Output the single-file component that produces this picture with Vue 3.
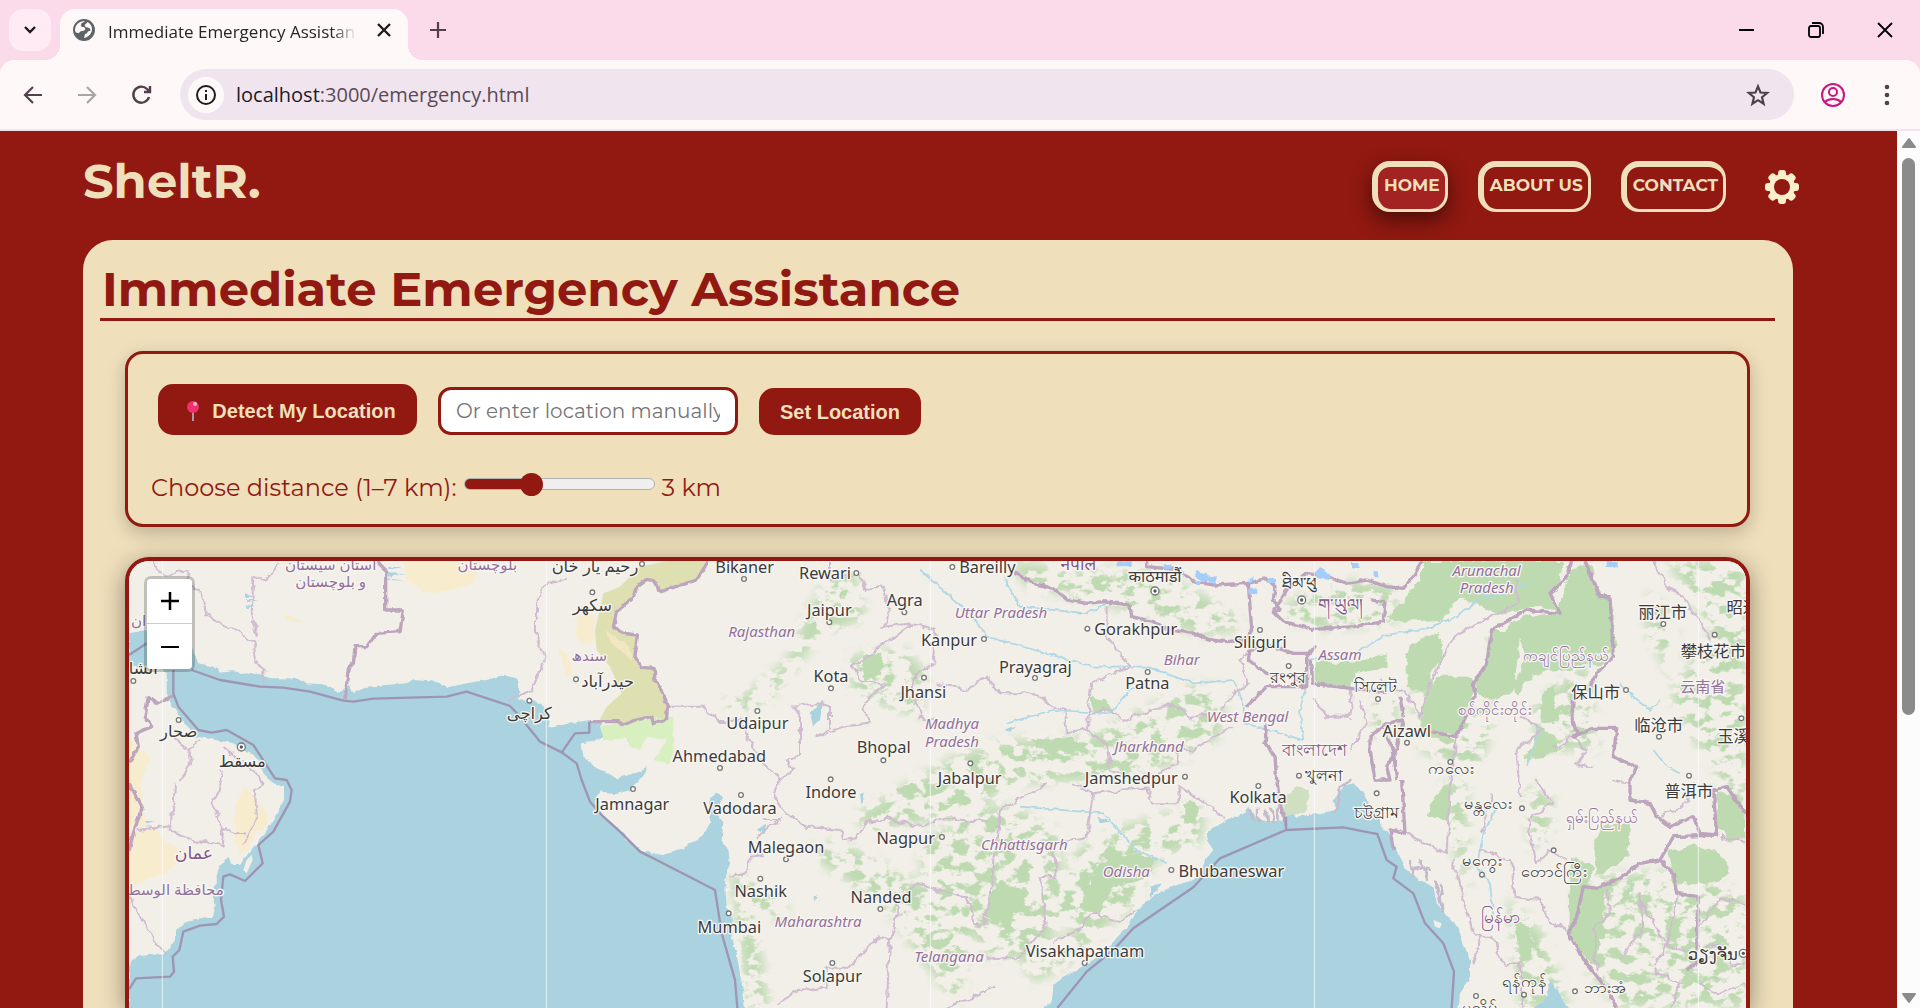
<script setup>
import { ref, computed } from 'vue'

const distance = ref(3)
const place = ref('')
const fill = computed(() => `${((distance.value - 1) / 6) * 100}%`)

const seas = [
  'M27 250 80 240 215 290 235 340 280 350 300 365 340 360 360 372 410 368 450 385 520 385 560 400 610 403 660 425 690 405 700 430 740 410 800 405 860 400 880 390 950 395 985 412 1040 400 1100 390 1150 375 1190 385 1198 430 1195 450 1250 455 1275 470 1290 510 1285 535 1350 520 1410 510 1450 515 1440 530 1450 560 1420 575 1385 580 1390 620 1430 655 1490 685 1560 665 1585 650 1560 690 1530 720 1490 732 1450 730 1440 720 1425 750 1430 780 1460 805 1500 840 1530 880 1570 905 1630 912 1690 895 1750 855 1770 820 1770 745 1790 730 1810 740 1800 760 1795 800 1810 815 1805 870 1825 900 1830 940 1815 990 1820 1070 1835 1100 1835 1160 1850 1210 1860 1270 1870 1330 1875 1380 27 1380 27 1245 50 1218 135 1212 165 1170 165 1145 200 1115 280 1100 285 1070 275 1020 290 1000 290 965 325 920 335 945 360 945 385 910 410 880 445 835 470 790 492 750 492 712 460 700 430 670 420 640 400 615 370 600 340 580 290 570 230 560 195 520 150 455 140 430 140 370 110 350 27 350Z',
  'M2765 1380 2795 1355 2800 1310 2830 1280 2895 1245 2950 1210 3020 1130 3070 1060 3120 1025 3180 1002 3220 990 3245 965 3255 930 3280 900 3260 870 3265 840 3325 810 3370 790 3385 770 3410 805 3440 815 3485 810 3490 770 3530 800 3565 795 3580 785 3600 790 3650 780 3640 750 3670 710 3700 700 3730 730 3750 770 3780 810 3780 820 3810 860 3835 910 3860 960 3900 990 3940 1010 3950 1060 3985 1100 4015 1130 4030 1180 4050 1230 4050 1280 4020 1330 4015 1380Z',
  'M4240 1380 4280 1340 4290 1290 4310 1315 4345 1380Z'
]

const deserts = [
  'M850 33H1080L1060 100 960 130 920 130 860 90Z',
  'M27 850 110 840 140 880 190 900 150 960 60 1000 27 1015Z',
  'M375 712 410 750 443 790 440 830 405 850 385 900 360 910 345 860 345 765Z',
  'M27 560 60 600 92 625 60 700 80 830 27 830Z',
  'M490 195 530 205 550 220 500 212Z',
  'M1370 200 1420 190 1425 270 1390 285 1365 255Z',
  'M1315 290 1345 320 1360 380 1340 380Z'
]
const dunes = 'M1455 240 1490 265 1530 290 1535 330 1500 300 1470 275Z'

const oliveArea = 'M1640 33H1765L1730 90 1620 125 1600 92 1580 88 1550 110 1540 140 1490 185 1480 232 1510 250 1552 255 1545 320 1565 352 1602 355 1605 390 1630 430 1642 470 1640 505 1600 520 1595 500 1540 512 1510 525 1495 515 1438 510 1460 470 1505 430 1470 350 1430 300 1425 240 1450 130 1500 110 1560 50Z'
const marsh = 'M1440 530 1500 520 1595 505 1660 500 1660 610 1645 645 1600 630 1640 570 1580 560 1560 600 1530 590 1520 565 1450 570Z'

const forests = [
  'M2230 310 2290 305 2280 370 2240 390 2225 350Z',
  'M2730 570 2850 565 2910 585 2860 610 2780 605Z',
  'M2910 440 2960 450 2975 480 2920 490Z',
  'M3585 335H3700L3800 310V350L3700 370 3690 415 3600 408 3580 380Z',
  'M3800 200 3850 150 3900 90 3910 33H4330L4325 100 4290 130 4320 190 4260 170 4200 180 4130 190 4020 140 3960 210 3850 215Z',
  'M4115 240 4150 240 4210 200 4310 190 4350 60 4410 45 4440 140 4475 140 4485 290 4440 350 4400 340 4350 360 4240 370 4190 440 4180 400 4220 330 4200 260 4180 430 4110 450 4060 430 4070 380 4100 340 4100 260Z',
  'M3870 280 3960 250 3970 320 3930 370 3940 430 3860 410 3860 330Z',
  'M3950 380 4060 380 4060 430 4010 560 3900 540 3910 460Z',
  'M4250 530 4290 550 4310 590 4340 580 4280 620 4215 628 4245 570Z',
  'M4270 430 4310 400 4300 520 4260 510Z',
  'M4440 830 4530 820 4525 920 4430 980 4420 900Z',
  'M4380 1020 4460 1010 4450 1090 4430 1250 4360 1190 4345 1130 4370 1060Z',
  'M4350 920 4420 950 4400 1010 4370 1090 4345 1140Z',
  'M3930 760 3990 690 3990 810 3920 800Z',
  'M4790 720 4850 740 4878 800V860L4830 880 4790 830Z',
  'M4640 910 4720 880 4800 910 4830 970 4780 1000 4660 1000Z',
  'M4190 1120 4230 1130 4235 1230 4200 1240Z',
  'M2940 940 3020 910 3110 920 3090 980 2980 1010 2940 1090 2870 1080Z',
  'M3190 760 3230 755 3230 810 3190 825Z',
  'M2330 710 2390 700 2410 725 2350 745Z',
  'M2640 990 2700 1020 2690 1090 2620 1120 2590 1090Z'
]

const woods = [
  'M1830 970 1900 990 2010 1080 1990 1110 1900 1080 1930 1250 1950 1374 1880 1374 1860 1200Z',
  'M2180 320 2350 290 2420 370 2400 500 2200 440Z',
  'M1800 450 1880 430 2000 330 2060 190 2110 100 2200 60 2240 200 2100 260 1960 440 1850 500Z',
  'M2200 800 2360 700 2500 620 2650 570 2900 560 3230 400 3320 420 3300 560 3170 640 3000 690 2700 700 2500 800 2250 850Z',
  'M2400 890 2560 760 2700 780 2820 850 2830 1050 2790 1170 2740 1230 2600 1220 2540 1110 2420 1080Z',
  'M2800 1100 2870 900 3000 830 3250 760 3250 870 3100 940 3050 1060 2920 1160Z',
  'M2700 1220 2850 1150 2960 1140 2850 1240 2740 1300Z',
  'M2660 33 2900 60 3100 60 3200 110 3320 170 3380 230 3250 260 3080 200 2900 150 2720 110Z',
  'M3470 190 3530 140 3700 90 3830 110 3830 220 3580 240Z',
  'M3870 430 3980 380 4090 440 4130 480 4080 660 3980 640 3900 600Z',
  'M3760 450 3830 430 3830 560 3760 580Z',
  'M3960 700 4040 690 4050 1050 4000 900Z',
  'M4230 480 4400 330 4440 600 4260 600Z',
  'M4220 700 4300 740 4290 860 4230 900Z',
  'M4160 1040 4270 1150 4350 1374 4200 1374Z',
  'M4360 1000 4720 960 4878 1040 4878 1374 4500 1374 4400 1260Z',
  'M4360 980 4720 960 4840 1040 4840 1374 4520 1374 4400 1240Z',
  'M4580 120 4670 200 4660 400 4580 250Z',
  'M4640 33 4878 33 4878 900 4780 650 4700 540 4650 430 4780 250Z',
  'M2050 900 2160 870 2400 1000 2560 1100 2520 1374 2420 1250 2300 1080Z'
]

const nationBorders = [
  'M1765 33 1730 90 1620 125 1600 92 1580 88 1550 110 1540 140 1490 185 1480 232 1510 250 1552 255 1545 320 1565 352 1602 355 1605 390 1630 430 1642 470 1640 505 1600 520 1595 500 1540 512 1510 525 1495 515 1410 515',
  'M770 33 797 60 797 180 850 180 840 245 770 250 740 290 705 290 700 340 685 355 675 450',
  'M27 700 67 770 40 850 27 900M27 640 55 590 48 550 95 530 75 500 85 440 110 460 160 437',
  'M2685 65 2740 100 2800 115 2845 150 2900 160 2950 155 3030 165 3035 200 3100 215 3150 240 3220 250 3270 270 3320 275 3380 270 3395 240 3385 100 3280 105 3220 95 3180 60 3080 50V33',
  'M3385 100 3440 85 3465 110 3460 150 3480 180 3460 185 3490 215 3580 238 3700 230 3790 215 3795 155 3750 150',
  'M3460 180 3480 155 3500 120 3560 70 3620 80 3680 100 3740 90 3800 110 3850 115 3880 80 3905 33',
  'M3395 270 3385 330 3440 370 3520 380 3560 410 3560 320 3585 290 3570 310 3520 310 3460 290 3395 300M3560 410 3440 410 3380 470M3570 330 3580 400 3690 415M3440 520 3435 580 3465 620 3470 690 3480 760 3498 830',
  'M3690 415 3800 425M3765 690 3750 600 3750 560 3800 520 3850 510 3830 600 3800 650 3810 690 3765 690M3850 500 3840 440M3800 560 3820 600 3830 690M3845 690 3855 850 3810 840 3820 900',
  'M4355 33 4335 90 4290 130 4320 190 4220 180 4115 240 4100 340 4060 400 4065 440 4010 560 3930 545M4395 33 4440 140 4470 140 4480 320 4430 370 4400 430M4360 450 4355 500 4370 550 4360 560 4420 535 4490 535 4480 620 4550 650 4530 690 4530 750 4590 760 4610 800 4650 830 4720 800 4740 850 4790 855 4780 720 4820 710 4878 790',
  'M4790 855 4660 860 4620 930 4560 940 4500 985 4430 1015 4390 1010 4370 1100 4345 1150 4400 1240 4470 1330 4490 1374',
  'M4620 930 4660 970 4670 1030 4735 1040 4730 1240 4700 1260'
]

const stateBorders = [
  'M98 33 130 75 205 60 205 110 240 120 255 190 360 250 400 275 408 330 430 352V410M470 45 440 95 400 80 395 200 410 260',
  'M160 560 205 600 240 570M165 700 155 840 220 870 305 885 310 840 275 760 300 720 305 660M205 600 210 640 185 690M310 590 400 660 430 700 405 720 410 800 375 880M50 840 160 828M27 1040 80 1140 135 1210M310 840 375 855',
  'M1340 80 1270 110 1245 170 1245 250 1275 330 1235 420 1160 455',
  'M1642 470 1750 470 1790 510 1860 510 1890 580 1930 640 1980 690 2020 660 2000 630 2040 610 2040 500 2020 470 2090 460 2130 470 2130 530 2090 560 2170 530 2250 520 2230 460 2290 400 2220 390 2200 350 2280 290 2380 220 2290 230 2310 190 2290 110 2240 120 2220 70 2130 90 2130 33',
  'M2380 220 2450 240 2440 340 2390 370 2380 420 2400 500 2440 510M2450 400 2540 420 2600 380 2640 430 2750 430 2790 470 2840 480 2840 550 2900 540 2910 400 3030 350 2960 260 2960 170',
  'M2900 490 2970 480 3010 510 3150 460 3210 500 3300 490 3340 430 3380 400 3360 330 3400 290',
  'M2900 540 2960 580 2970 660 3060 690 3180 640 3160 600 3220 600 3340 530',
  'M1930 810H1980L1910 860M1980 690 1960 730 1990 780 2060 830 2160 840 2170 870 2210 865 2240 820 2300 800 2380 830 2500 805 2600 820M1830 980 1880 970 1890 920 1930 915',
  'M1970 1365 2040 1320 2120 1310 2120 1250 2190 1250 2280 1155 2310 1170 2340 1070 2320 1060 2390 1000 2540 1040 2560 1120 2590 1120 2610 1060 2620 960 2640 780 2780 700',
  'M2850 700 2920 730 2900 860 2800 880 2810 980 2760 985 2780 1120 2700 1220 2600 1230',
  'M2310 1170 2300 1374M2480 1374 2620 1310M2800 1180 2870 1140 2920 1085 3000 1120 3045 1080',
  'M2920 730 3080 710 3100 760 3170 760 3180 710 3260 760 3320 810',
  'M3780 390 3860 430 3900 500 3930 400 3970 320 4010 250 4110 200 4190 160 4190 90M4010 560 3990 690 3980 910 3840 840M4200 500 4270 540 4190 600 4200 750M4240 690 4300 760 4220 810 4250 940 4290 900 4340 930',
  'M4080 850 4120 730M4080 900 4170 930 4180 1040 4260 1050 4290 1120 4350 1140M4000 930 4050 1130 4080 1160 4060 1250M4080 1160 4120 1160 4150 1250 4200 1240 4210 1374',
  'M4460 1015 4470 1090 4420 1130 4430 1260M4560 1030 4570 1130 4500 1230M4560 1050 4640 1180 4600 1250M4670 1040 4640 1190 4720 1210M4600 33 4640 110 4700 150 4750 230 4770 270',
  'M4735 1130 4800 1050 4878 1060M4735 1200 4800 1180 4840 1250 4878 1240M4600 1260 4680 1300 4650 1374M4735 1300 4800 1330 4878 1300',
  'M3580 450 3620 500 3690 500 3700 450 3690 415M3720 450 3740 520 3690 600',
  'M4300 590 4360 560 4400 600 4370 640 4420 650M4620 800 4700 760 4720 700M4480 690 4530 700M4800 860 4878 880'
]

const waters = [
  'M215 360 300 390 420 410 490 413 570 425 670 452 700 455 760 446 980 440 1040 425 1170 468 1200 500 1260 575 1325 607 1365 550 1408 548V515M1325 607 1370 640 1385 690 1410 755 1450 800 1500 845 1560 905 1610 930 1785 1020 1805 1150 1845 1290 1852 1374',
  'M160 360V430L175 470 235 540 275 548 320 540 400 585 465 685 500 690 515 720 510 755 460 845 415 885 428 940 375 993 330 973 310 980 303 1050 312 1100 290 1122 240 1127 190 1145 178 1200 158 1220 162 1265 150 1280 48 1285 27 1318M27 315 50 300 80 280',
  'M2812 1374 2900 1265 2980 1200 3040 1135 3220 1012 3300 925 3498 840 3670 832 3750 848 3772 852 3800 930 3830 950 3820 985 3880 1030 3915 1120 3970 1180 4002 1265 3995 1374M3498 840V800'
]

const rivers = [
  'M2400 60 2560 200 2600 260 2780 310 2920 350 3080 350 3220 400 3340 390 3370 460 3375 520',
  'M3375 520 3550 570 3540 480 3560 400 3560 330 3700 310 3800 255 3920 235 4010 200 4080 145 4150 130 4230 100',
  'M2650 80 2700 170 2900 190 2960 160M2660 520 2800 480 2970 490 3040 410M2700 770 2950 790 3050 900 3140 940',
  'M4220 650 4260 540 4240 520M4130 770 4090 850 4070 950 4110 1000 4120 1100M4600 600 4640 650 4680 670M4500 400 4550 450 4590 480 4620 450'
]

const cities = [
  [70, 372, 'الشا'], [1228, 508, 'کراچی'], [176, 562, 'صحار'], [367, 652, 'مسقط'],
  [1425, 65, 'رحیم یار خان'], [1417, 182, 'سکھر'], [1463, 410, 'حیدرآباد'],
  [1874, 70, 'Bikaner'], [2115, 86, 'Rewari'], [2128, 198, 'Jaipur'], [2354, 167, 'Agra'],
  [2487, 287, 'Kanpur'], [2133, 397, 'Kota'], [2410, 444, 'Jhansi'], [1912, 538, 'Udaipur'],
  [2291, 610, 'Bhopal'], [1798, 637, 'Ahmedabad'], [2549, 701, 'Jabalpur'], [1537, 780, 'Jamnagar'],
  [2133, 745, 'Indore'], [1860, 792, 'Vadodara'], [1998, 910, 'Malegaon'], [2357, 882, 'Nagpur'],
  [1922, 1040, 'Nashik'], [2283, 1060, 'Nanded'], [1828, 1148, 'Mumbai'], [2137, 1297, 'Solapur'],
  [2602, 70, 'Bareilly'], [3105, 95, 'काठमाडौं'], [3047, 254, 'Gorakhpur'], [3421, 293, 'Siliguri'],
  [2746, 370, 'Prayagraj'], [3082, 418, 'Patna'], [3505, 398, 'রংপুর'], [3613, 692, 'খুলনা'],
  [3034, 702, 'Jamshedpur'], [3537, 118, 'ཐིམ་ཕུ'], [3767, 425, 'সিলেট'], [3414, 758, 'Kolkata'],
  [3334, 980, 'Bhubaneswar'], [2895, 1222, 'Visakhapatnam'], [3770, 804, 'চট্টগ্রাম'],
  [4628, 205, '丽江市'], [4893, 190, '昭通市'], [4780, 320, '攀枝花市'], [4427, 445, '保山市'],
  [4616, 543, '临沧市'], [4865, 575, '玉溪市'], [3860, 560, 'Aizawl'], [3993, 672, 'ကလေး'],
  [4105, 778, 'မန္တလေး'], [4706, 742, '普洱市'], [4086, 948, 'မကွေး'], [4303, 980, 'တောင်ကြီး'],
  [4213, 1310, 'ရန်ကုန်'], [4455, 1328, 'ဘားအံ'], [4778, 1230, 'ວຽງຈັນ'], [4080, 1390, 'ပုသိမ်']
]

const states = [
  [1925, 262, 'Rajasthan'], [2496, 537, 'Madhya'], [2496, 590, 'Pradesh'], [2094, 1130, 'Maharashtra'],
  [2487, 1235, 'Telangana'], [2643, 203, 'Uttar Pradesh'], [3185, 346, 'Bihar'], [3660, 330, 'Assam'],
  [3383, 515, 'West Bengal'], [3087, 605, 'Jharkhand'], [2713, 900, 'Chhattisgarh'], [3019, 982, 'Odisha'],
  [4100, 78, 'Arunachal'], [4100, 130, 'Pradesh']
]

const regions = [
  [632, 61, 'استان سیستان'], [632, 112, 'و بلوچستان'], [1102, 60, 'بلوچستان'], [56, 228, 'ان'],
  [1408, 332, 'سندھ'], [150, 1034, 'محافظة الوسطى'], [4335, 333, 'ကချင်ပြည်နယ်'],
  [4125, 495, 'စစ်ကိုင်းတိုင်း'], [4445, 820, 'ရှမ်းပြည်နယ်'], [4748, 427, '云南省']
]

const countries = [
  [222, 927, 'عمان'], [2875, 59, 'नेपाल'], [3583, 617, 'বাংলাদেশ'], [3660, 184, 'ག་ཡུལ།'], [4140, 1120, 'မြန်မာ']
]

const dots = [
  [40, 393], [176, 510], [1228, 452], [1566, 42], [1417, 127], [1368, 388], [1872, 87], [2209, 69],
  [2353, 187], [2128, 217], [2592, 267], [2133, 415], [2412, 383], [1912, 483], [2290, 631], [1800, 654],
  [2551, 640], [2132, 688], [2497, 51], [1539, 717], [1863, 735], [1998, 928], [2466, 861], [1921, 986],
  [2281, 1077], [1826, 1090], [2137, 1239], [2902, 236], [2745, 384], [3083, 366], [3420, 240], [3506, 348],
  [3537, 677], [3195, 680], [3774, 447], [3415, 708], [3154, 960], [2894, 1239], [3770, 730], [4630, 222],
  [4784, 254], [4518, 420], [4617, 560], [4864, 505], [4707, 677], [3861, 578], [3991, 636], [4206, 775],
  [4301, 901], [4086, 974], [4212, 1334], [4365, 1324], [4068, 1338]
]
const capitals = [[364, 591], [3105, 123], [3545, 150], [4870, 1210]]
const seams = [127, 1279, 2431, 3583, 4735]
</script>

<template>
  <div class="window">
    <header class="tabs">
      <button class="tab-search" aria-label="Search tabs">
        <svg width="16" height="16" viewBox="0 0 16 16"><path d="m3 5 5 5 5-5" fill="none" stroke="#1f1a1e" stroke-width="2.4" /></svg>
      </button>
      <div class="tab">
        <svg width="24" height="24" viewBox="0 0 24 24">
          <circle cx="12" cy="12" r="11" fill="#5f6368" />
          <path d="M13 3c-1 2-4 1-4 4s3 1 4 3-1 3-3 3-2 2-4 2-3-1-3-3c0-5 4-9 10-9Zm2 1c3 1 5 4 5 7 0 4-3 8-8 9l1-4c3 0 2-3 4-3s2-2 0-3-3 0-4-2 2-2 2-4Z" fill="#fff8f8" />
        </svg>
        <span class="tab-title">Immediate Emergency Assistance</span>
        <button class="plain" aria-label="Close tab">
          <svg width="16" height="16" viewBox="0 0 16 16"><path d="m2 2 12 12M14 2 2 14" stroke="#1f1a1e" stroke-width="2.4" /></svg>
        </button>
      </div>
      <button class="plain new-tab" aria-label="New tab">
        <svg width="18" height="18" viewBox="0 0 18 18"><path d="M9 1v16M1 9h16" stroke="#54404d" stroke-width="2.2" /></svg>
      </button>
      <div class="controls">
        <button class="plain" aria-label="Minimize"><svg width="18" height="18" viewBox="0 0 18 18"><path d="M1 9h15" stroke="#000" stroke-width="2" /></svg></button>
        <button class="plain" aria-label="Restore">
          <svg width="18" height="18" viewBox="0 0 18 18" fill="none" stroke="#000" stroke-width="1.8"><rect x="2" y="5" width="11" height="11" rx="2" /><path d="M5 2h7a4 4 0 0 1 4 4v7" /></svg>
        </button>
        <button class="plain" aria-label="Close"><svg width="18" height="18" viewBox="0 0 18 18"><path d="m2 2 14 14M16 2 2 16" stroke="#000" stroke-width="1.8" /></svg></button>
      </div>
    </header>

    <div class="toolbar">
      <button class="plain" aria-label="Back"><svg width="22" height="22" viewBox="0 0 22 22" fill="none" stroke="#54404d" stroke-width="2.2"><path d="M20 11H3M11 3l-8 8 8 8" /></svg></button>
      <button class="plain" aria-label="Forward"><svg width="22" height="22" viewBox="0 0 22 22" fill="none" stroke="#aaa3a7" stroke-width="2.2"><path d="M2 11h17M11 3l8 8-8 8" /></svg></button>
      <button class="plain" aria-label="Reload"><svg width="22" height="22" viewBox="0 0 22 22" fill="none" stroke="#54404d" stroke-width="2.4"><path d="M19 13a8 8 0 1 1-2-8l3 3M20 2v6h-6" /></svg></button>
      <div class="omnibox">
        <button class="info" aria-label="Site information">
          <svg width="22" height="22" viewBox="0 0 22 22" fill="none" stroke="#1f1a1e" stroke-width="2"><circle cx="11" cy="11" r="9" /><path d="M11 10v6M11 6v2" /></svg>
        </button>
        <span class="url"><b>localhost</b>:3000/emergency.html</span>
        <button class="plain" aria-label="Bookmark">
          <svg width="26" height="26" viewBox="0 0 24 24" fill="none" stroke="#4d4149" stroke-width="2"><path d="m12 4 2.300 5.700 6.200.4-4.800 4 1.500 6-5.200-3.300-5.200 3.300 1.500-6-4.800-4 6.200-.4Z" /></svg>
        </button>
      </div>
      <button class="plain profile" aria-label="Profile">
        <svg width="26" height="26" viewBox="0 0 26 26" fill="none" stroke="#c8177f" stroke-width="2"><circle cx="13" cy="13" r="11" /><circle cx="13" cy="10" r="4" /><path d="M5 20c4-4 12-4 16 0" /></svg>
      </button>
      <button class="plain" aria-label="Menu"><svg width="6" height="24" viewBox="0 0 6 24" fill="#54404d"><circle cx="3" cy="4" r="2.300" /><circle cx="3" cy="12" r="2.300" /><circle cx="3" cy="20" r="2.300" /></svg></button>
    </div>

    <div class="viewport">
      <div class="page">
        <div class="site-head">
          <div class="brand">SheltR.</div>
          <nav>
            <a href="#home" class="active">HOME</a>
            <a href="#about">ABOUT US</a>
            <a href="#contact">CONTACT</a>
            <button class="plain gear" aria-label="Settings">
              <svg width="36" height="36" viewBox="-18 -18 36 36">
                <g fill="#fbeecb"><rect v-for="n in 4" :key="n" x="-4" y="-17" width="8" height="34" rx="3" :transform="`rotate(${n * 45})`" /><circle r="13" /></g>
                <circle r="8" fill="#911911" />
              </svg>
            </button>
          </nav>
        </div>

        <main>
          <h1>Immediate Emergency Assistance</h1>
          <section class="panel">
            <div class="row">
              <button class="detect">
                <svg width="14" height="22" viewBox="0 0 14 22"><path d="M7 10v11" stroke="#a99aa6" stroke-width="2" /><circle cx="7" cy="7" r="6" fill="#f0306f" /><circle cx="9" cy="4" r="2" fill="#ffb3cc" /></svg>
                Detect My Location
              </button>
              <input v-model="place" type="text" aria-label="Location" placeholder="Or enter location manually" />
              <button class="set">Set Location</button>
            </div>
            <div class="distance">
              <label for="distance">Choose distance (1–7 km):</label>
              <input id="distance" v-model.number="distance" type="range" min="1" max="7" :style="{ '--fill': fill }" />
              <output for="distance">{{ distance }} km</output>
            </div>
          </section>

          <section class="map" aria-label="Map">
            <svg class="tiles" viewBox="27 33 4851 1341" preserveAspectRatio="xMinYMin slice">
              <defs>
                <filter id="rough" x="-5%" y="-5%" width="110%" height="110%">
                  <feTurbulence type="fractalNoise" baseFrequency="0.03" numOctaves="3" seed="4" />
                  <feDisplacementMap in="SourceGraphic" scale="26" xChannelSelector="R" yChannelSelector="G" />
                </filter>
                <filter id="coast" x="-1%" y="-1%" width="102%" height="102%">
                  <feTurbulence type="fractalNoise" baseFrequency="0.05" numOctaves="2" seed="7" />
                  <feDisplacementMap in="SourceGraphic" scale="12" xChannelSelector="R" yChannelSelector="G" />
                </filter>
                <filter id="speckle" x="0" y="0" width="100%" height="100%">
                  <feTurbulence type="fractalNoise" baseFrequency="0.022 0.03" numOctaves="5" seed="11" />
                  <feColorMatrix values="0 0 0 0 0  0 0 0 0 0  0 0 0 0 0  9 0 0 0 -4.400" result="n" />
                  <feGaussianBlur in="SourceGraphic" stdDeviation="18" />
                  <feComposite in2="n" operator="in" />
                </filter>
              </defs>
              <rect x="27" y="33" width="4851" height="1341" fill="#f2efe9" />
              <g fill="#f7ecce" filter="url(#coast)"><path v-for="d in deserts" :key="d" :d="d" /></g>
              <g fill="#bedab1" filter="url(#speckle)"><path v-for="d in woods" :key="d" :d="d" /></g>
              <g fill="#bedab1" filter="url(#rough)"><path v-for="d in forests" :key="d" :d="d" /></g>
              <path :d="oliveArea" fill="#dee0b1" />
              <path :d="dunes" fill="#f3e7c3" filter="url(#coast)" />
              <path :d="marsh" fill="#d8efc0" filter="url(#coast)" />
              <g fill="#aad3df" filter="url(#coast)">
                <path v-for="d in seas" :key="d" :d="d" />
                <path d="M2070 490 2110 450 2100 510 2080 530ZM1910 840 1940 820 1930 850ZM2220 730 2235 725 2225 770ZM3090 1010 3125 1000 3110 1025 3090 1040ZM2650 540 2690 525 2670 545ZM2930 800 2970 815 2940 820ZM2080 1040 2090 1035 2085 1055ZM375 130 400 140 375 145ZM378 150 415 150 380 157ZM378 165 405 168 380 175ZM805 50 850 52 805 58ZM800 70 860 72 805 80ZM800 85 855 92 805 90ZM75 812 105 814 80 820Z" />
              </g>
              <path d="M370 960 380 930 395 915 398 930 380 970ZM3940 1110 3965 1120 3960 1135 3945 1130ZM3590 770 3620 700 3650 710 3630 780Z" fill="#f2efe9" />
              <path d="M3490 800 3500 740 3530 710 3570 720 3560 780 3520 795Z" fill="#cfe0c2" filter="url(#rough)" />
              <path d="M3390 780 3400 815M3415 770V812M3435 775 3440 815M3455 770 3460 812M3475 765V808M3870 930 3890 980M3900 930 3920 990M3880 950 3930 960M3940 990 3960 1060M3960 1000 3970 1090M3640 790 3660 720 3690 690" fill="none" stroke="#c5bac9" stroke-width="9" filter="url(#rough)" />
              <g fill="none" stroke="#afd8e6" stroke-width="5" filter="url(#coast)"><path v-for="d in rivers" :key="d" :d="d" /></g>
              <g fill="none" stroke="#d0bcd0" stroke-width="6" filter="url(#rough)"><path v-for="d in stateBorders" :key="d" :d="d" /></g>
              <g fill="none" stroke="#bda5bd" stroke-width="10" stroke-linejoin="round" filter="url(#coast)"><path v-for="d in nationBorders" :key="d" :d="d" /></g>
              <g fill="none" stroke="#9d95b3" stroke-width="7" stroke-linejoin="round"><path v-for="d in waters" :key="d" :d="d" /></g>
              <path d="M2990 40h45M3130 45h25M3225 70l60 20M3235 90v15M3380 85h20M3440 90h25M3385 125h30M3590 65l35 15M3690 48h20M3770 60v25M4460 42h30" stroke="#a3cdfb" stroke-width="18" filter="url(#rough)" />
              <g stroke="#fff" stroke-opacity="0.700" stroke-width="3"><path v-for="x in seams" :key="x" :d="`M${x} 33V1374`" /></g>
              <g fill="#fff" stroke="#777" stroke-width="4">
                <circle v-for="[x, y] in dots" :key="`${x}-${y}`" :cx="x" :cy="y" r="7" />
                <circle v-for="[x, y] in capitals" :key="`${x}-${y}`" :cx="x" :cy="y" r="12" />
              </g>
              <circle v-for="[x, y] in capitals" :key="`${x}-${y}`" :cx="x" :cy="y" r="5" fill="#555" />
              <text v-for="[x, y, name] in cities" :key="name" :x="x" :y="y" class="city">{{ name }}</text>
              <text v-for="[x, y, name] in states" :key="name + y" :x="x" :y="y" class="state">{{ name }}</text>
              <text v-for="[x, y, name] in regions" :key="name" :x="x" :y="y" class="region">{{ name }}</text>
              <text v-for="[x, y, name] in countries" :key="name" :x="x" :y="y" class="country">{{ name }}</text>
            </svg>
            <div class="zoom">
              <button aria-label="Zoom in"><svg width="19" height="18" viewBox="0 0 19 18"><path d="M10 0v18M1 9h18" stroke="#000" stroke-width="2.500" /></svg></button>
              <button aria-label="Zoom out"><svg width="19" height="18" viewBox="0 0 19 18"><path d="M1 9h18" stroke="#000" stroke-width="2" /></svg></button>
            </div>
          </section>
        </main>
      </div>
      <div class="scrollbar" aria-hidden="true">
        <svg width="16" height="12" viewBox="0 0 16 12"><path d="M8 2 14 10H2Z" fill="#8b8b8b" stroke="#8b8b8b" stroke-width="2" stroke-linejoin="round" /></svg>
        <div class="track"><div class="thumb"></div></div>
        <svg width="16" height="12" viewBox="0 0 16 12"><path d="M8 10 14 2H2Z" fill="#8b8b8b" stroke="#8b8b8b" stroke-width="2" stroke-linejoin="round" /></svg>
      </div>
    </div>
  </div>
</template>

<style>
body { margin: 0; }
</style>

<style scoped>
* { box-sizing: border-box; }
button { padding: 0; border: 0; font: inherit; cursor: pointer; }
svg { display: block; }
.window { display: flex; flex-direction: column; height: 100vh; overflow: hidden; background: #fbdaea; font-family: "Noto Sans", sans-serif; }
.plain { display: grid; place-items: center; background: none; }

.tabs { display: flex; height: 60px; padding: 9px 26px 0 9px; }
.tab-search { display: grid; place-items: center; width: 42px; height: 42px; border-radius: 14px; background: #feebf4; }
.tab { position: relative; display: flex; align-items: center; width: 348px; height: 51px; margin-left: 9px; padding: 0 16px 10px 12px; border-radius: 15px 15px 0 0; background: #fff8f8; }
.tab::before, .tab::after { content: ""; position: absolute; bottom: 0; width: 15px; height: 15px; }
.tab::before { right: 100%; background: radial-gradient(circle at 0 0, transparent 15px, #fff8f8 15px); }
.tab::after { left: 100%; background: radial-gradient(circle at 100% 0, transparent 15px, #fff8f8 15px); }
.tab-title { flex: 1; margin: 4px 14px 0 12px; overflow: hidden; font: 400 17px/24px "Open Sans", "Noto Sans", sans-serif; color: #2a2328; white-space: nowrap; mask-image: linear-gradient(90deg, #000 88%, transparent 98%); }
.new-tab { width: 42px; height: 42px; margin-left: 9px; }
.controls { display: flex; gap: 51px; height: 42px; margin-left: auto; }

.toolbar { display: flex; align-items: center; height: 71px; padding: 0 30px 0 22px; gap: 32px; border-bottom: 2px solid #f0e2ee; border-radius: 14px 14px 0 0; background: #fff8f8; }
.omnibox { flex: 1; display: flex; align-items: center; height: 51px; margin-left: -4px; padding: 0 23px 0 8px; border-radius: 26px; background: #f0e5ee; }
.info { display: grid; place-items: center; width: 36px; height: 36px; border-radius: 50%; background: #fff8f8; }
.url { flex: 1; margin-left: 12px; font: 400 20px/28px "Open Sans", "Noto Sans", sans-serif; color: #5b4a56; }
.url b { font-weight: 400; color: #1f1a1e; }
.profile { margin: 0 6px 0 -6px; }

.viewport { flex: 1; display: flex; min-height: 0; }
.page { flex: 1; display: flex; flex-direction: column; min-width: 0; padding: 0 104px 0 83px; overflow: hidden; background: #911911; font-family: Montserrat, Inter, sans-serif; }
.site-head { display: flex; justify-content: space-between; flex: none; height: 109px; padding-top: 20px; }
.brand { font-size: 48px; line-height: 60px; font-weight: 700; color: #efdfbb; }
nav { display: flex; align-items: flex-start; gap: 30px; margin-right: -7px; padding-top: 10px; }
nav a { height: 51px; padding: 7px 5px 0 6px; border: 3px solid #efdfbb; border-width: 6px 3px 3px 6px; border-radius: 18px; font-size: 17px; line-height: 22px; font-weight: 700; color: #efdfbb; text-decoration: none; }
nav a.active { background: #a32222; box-shadow: 0 8px 20px rgba(0, 0, 0, 0.5); }
.gear { height: 51px; margin-left: 8px; }

main { flex: 1; display: flex; flex-direction: column; min-height: 0; padding: 18px 18px 0 17px; border-radius: 30px 30px 0 0; background: #efdfbb; color: #911911; }
h1 { flex: none; margin: 0; padding: 2px 2px 0; border-bottom: 3px solid #911911; font-size: 48px; line-height: 58px; font-weight: 700; }
.panel { flex: none; margin: 30px 25px 0; padding: 30px 23px 22px; border: 3px solid #911911; border-radius: 18px; background: #efdfbb; box-shadow: 0 6px 18px rgba(0, 0, 0, 0.22); }
.row { display: flex; align-items: flex-end; gap: 21px; padding-left: 7px; }
.row button { display: flex; align-items: center; justify-content: center; border-radius: 15px; background: #911911; color: #efdfbb; font: 700 20px/24px "Liberation Sans", sans-serif; }
.row .detect { width: 259px; height: 51px; padding: 2px 0 0 7px; gap: 12px; }
.set { width: 162px; height: 47px; }
.row input { width: 300px; height: 48px; padding: 0 15px; border: 3px solid #911911; border-radius: 13px; background: #fff; font: 400 20px/24px Montserrat, Inter, sans-serif; }
.row input::placeholder { color: #757575; }
.distance { display: flex; align-items: center; height: 33px; margin-top: 34px; gap: 7px; padding-top: 4px; font-size: 24px; line-height: 30px; }
.distance input { appearance: none; width: 191px; height: 24px; margin: 0 0 7px; background: none; }
.distance input::-webkit-slider-runnable-track { height: 12px; border: 1px solid #b2b2b2; border-radius: 6px; background: linear-gradient(90deg, #911911 var(--fill), #efefef var(--fill)); }
.distance input::-webkit-slider-thumb { appearance: none; width: 23px; height: 23px; margin-top: -6px; border-radius: 50%; background: #911911; }

.map { position: relative; flex: 1; min-height: 0; margin: 30px 25px 0; border: 4px solid #911911; border-bottom: 0; border-radius: 24px 24px 0 0; overflow: hidden; background: #f2efe9; box-shadow: 0 6px 24px rgba(0, 0, 0, 0.4); }
.tiles { width: 100%; height: 100%; }
.tiles text { font-family: "Noto Sans", "Noto Sans CJK SC", "DejaVu Sans", sans-serif; text-anchor: middle; paint-order: stroke; stroke: #f8f6f2; stroke-width: 8px; stroke-linejoin: round; }
.tiles .city { font-size: 49px; fill: #3c3c3c; }
.tiles .state { font-size: 45px; font-style: italic; fill: #93719a; }
.tiles .region { font-size: 45px; fill: #93719a; }
.tiles .country { font-size: 52px; fill: #83578a; }
.zoom { position: absolute; top: 15px; left: 15px; display: flex; flex-direction: column; width: 51px; border: 3px solid rgba(0, 0, 0, 0.2); border-radius: 7px; background-clip: padding-box; }
.zoom button { display: grid; place-items: center; height: 45px; background: #fff; }
.zoom button:first-child { height: 45px; border-bottom: 1px solid #ccc; border-radius: 4px 4px 0 0; }
.zoom button:last-child { border-radius: 0 0 4px 4px; }

.scrollbar { flex: none; display: flex; flex-direction: column; align-items: center; width: 23px; padding: 6px 0 4px; background: #fcfcfc; }
.track { flex: 1; width: 13px; padding: 9px 0 15px; }
.thumb { height: 68%; border-radius: 7px; background: #8b8b8b; }
</style>
